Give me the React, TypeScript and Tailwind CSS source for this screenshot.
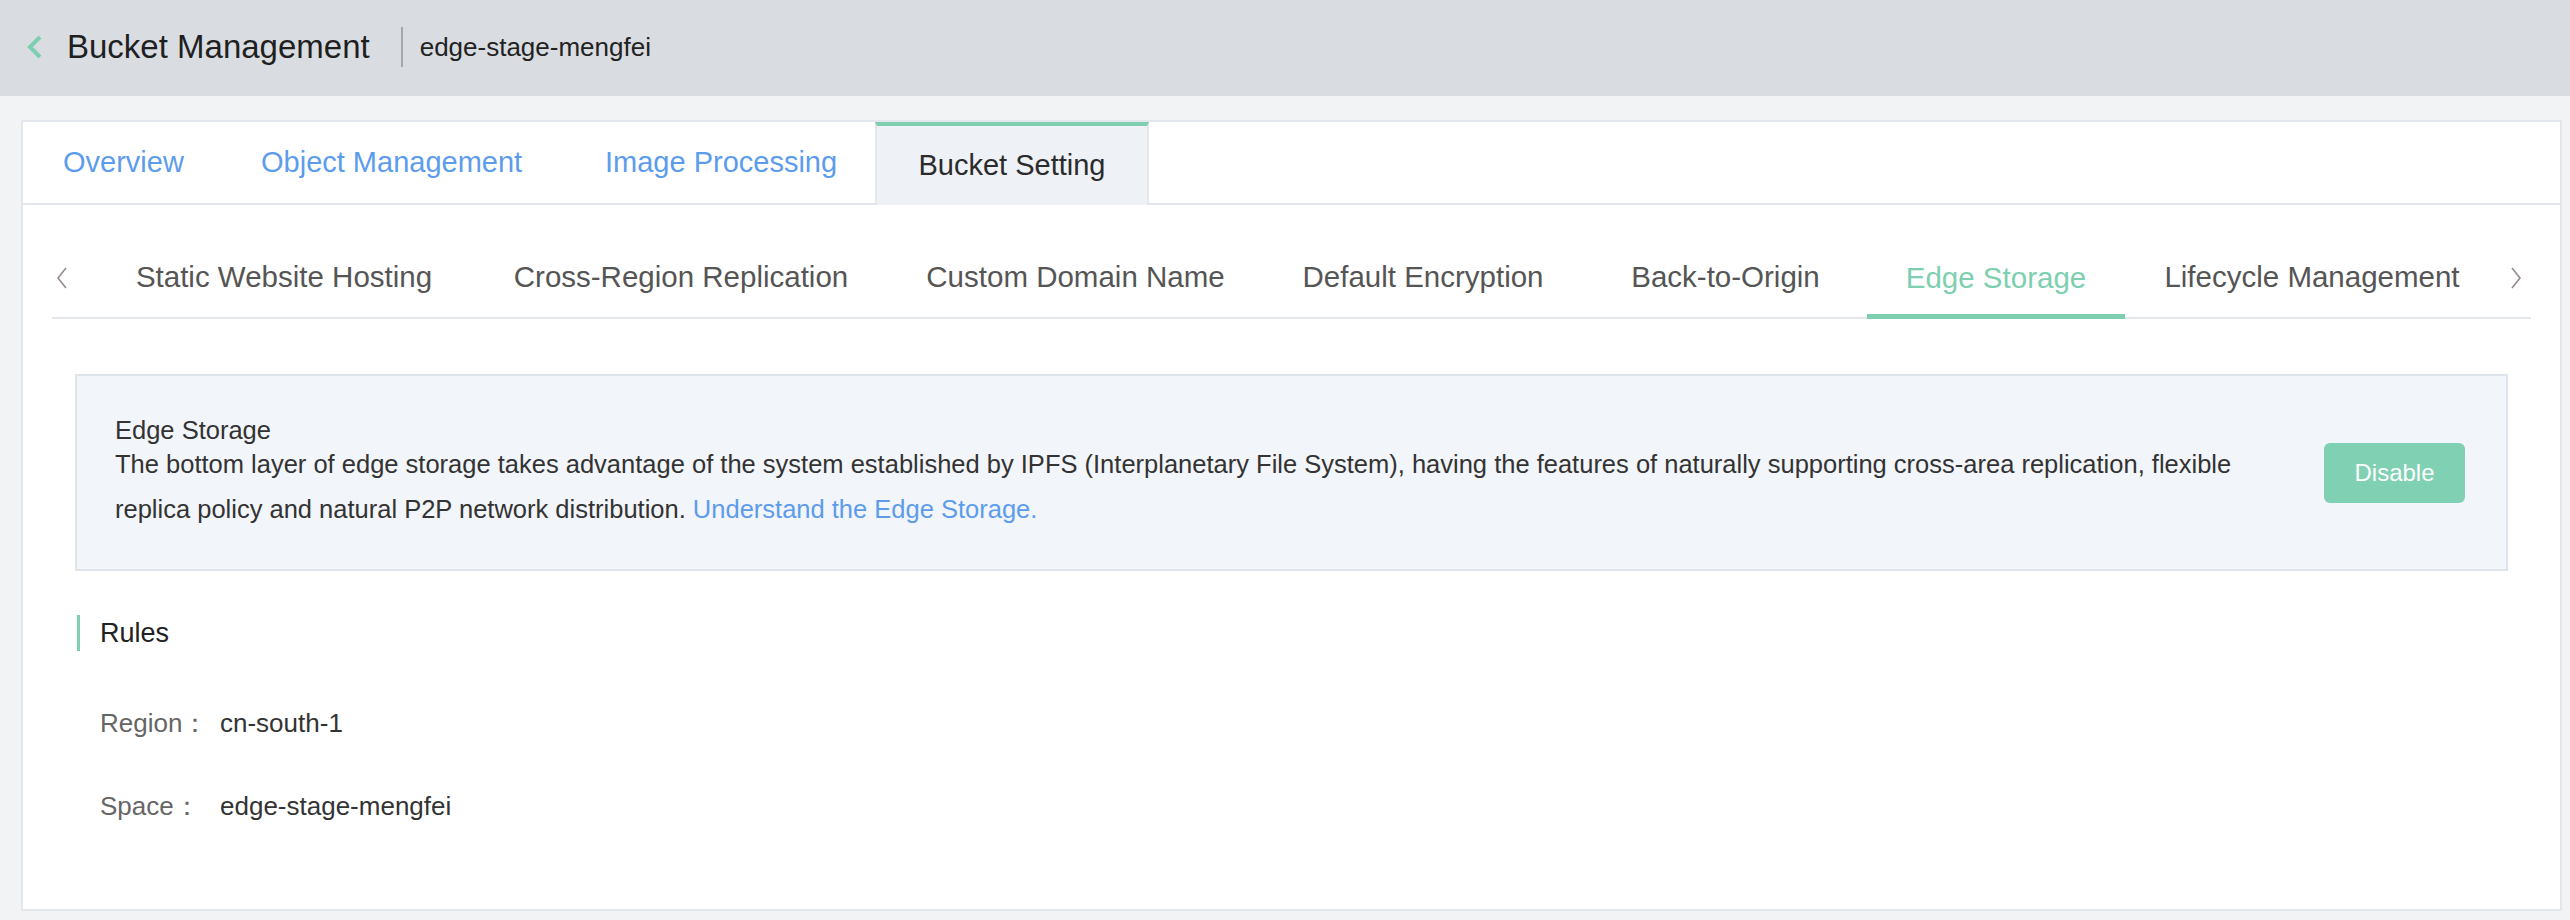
const mainTabs = [
  { label: "Overview", w: "w-[198px]" },
  { label: "Object Management", w: "w-[344px]" },
  { label: "Image Processing", w: "w-[310px]" },
];

const subTabs = [
  { label: "Static Website Hosting", w: "w-[378px]" },
  { label: "Cross-Region Replication", w: "w-[416px]" },
  { label: "Custom Domain Name", w: "w-[373px]" },
  { label: "Default Encryption", w: "w-[322px]" },
  { label: "Back-to-Origin", w: "w-[283px]" },
  { label: "Edge Storage", w: "w-[258px]", active: true },
  { label: "Lifecycle Management", w: "w-[374px]" },
];

function Chevron({ dir, className }: { dir: "left" | "right"; className?: string }) {
  return (
    <svg width="12" height="24" viewBox="0 0 12 24" className={className} fill="none">
      {dir === "left" ? (
        <polyline points="10,2 2,12 10,22" stroke="currentColor" strokeWidth="1.6" />
      ) : (
        <polyline points="2,2 10,12 2,22" stroke="currentColor" strokeWidth="1.6" />
      )}
    </svg>
  );
}

function Header() {
  return (
    <header className="flex h-[96px] items-center bg-[#d9dde1] pb-[2px]">
      <svg width="16" height="24" viewBox="0 0 16 24" className="ml-[27px]" fill="none">
        <polyline points="13,2 3,12 13,22" stroke="#7dcfb0" strokeWidth="4" />
      </svg>
      <h1 className="ml-[24px] text-[33px] text-[#1f1f1f]">Bucket Management</h1>
      <div className="ml-[31px] h-[40px] w-[2px] bg-[#a2a7ac]" />
      <span className="ml-[17px] text-[26px] text-[#222]">edge-stage-mengfei</span>
    </header>
  );
}

function TabBar() {
  return (
    <div className="flex h-[83px] border-b-2 border-[#e3e6eb]">
      {mainTabs.map((t) => (
        <div key={t.label} className={`${t.w} flex items-center pl-[40px] text-[29px] text-[#5d9cec]`}>
          {t.label}
        </div>
      ))}
      <div className="-mb-[2px] flex w-[274px] items-center justify-center border-x-2 border-t-4 border-x-[#e3e6eb] border-t-[#7dcfb0] bg-[#eef1f6] text-[29px] text-[#2b2b2b]">
        Bucket Setting
      </div>
    </div>
  );
}

function SubTabs() {
  return (
    <div className="mx-[29px] mt-[33px] flex h-[81px] border-b-2 border-[#e3e6eb]">
      <div className="flex w-[43px] items-center pl-[4px] text-[#958a90]">
        <Chevron dir="left" />
      </div>
      {subTabs.map((t) => (
        <div
          key={t.label}
          className={`${t.w} flex items-center justify-center text-[29.5px] ${
            t.active ? "-mb-[2px] border-b-[5px] border-[#7dcfb0] pt-[5px] text-[#7dcfb0]" : "text-[#555]"
          }`}
        >
          {t.label}
        </div>
      ))}
      <div className="flex flex-1 items-center pl-[11px] text-[#958a90]">
        <Chevron dir="right" />
      </div>
    </div>
  );
}

function InfoBox() {
  return (
    <div className="mt-[55px] flex h-[197px] border-2 border-[#dfe3ea] bg-[#f2f5fa] pl-[38px] pr-[41px]">
      <div className="flex-1 pt-[43px] text-[25.5px] text-[#333]">
        <div className="leading-[23px]">Edge Storage</div>
        <p className="leading-[45px]">
          The bottom layer of edge storage takes advantage of the system established by IPFS (Interplanetary File System), having the features of naturally supporting cross-area replication, flexible
          <br />
          replica policy and natural P2P network distribution.{" "}
          <a className="text-[#5d9cec]">Understand the Edge Storage.</a>
        </p>
      </div>
      <button className="self-center h-[60px] w-[141px] rounded-[6px] bg-[#80d0b4] text-[24px] text-white">
        Disable
      </button>
    </div>
  );
}

function Rules() {
  return (
    <div>
      <div className="mt-[42px] ml-[2px] flex items-center">
        <div className="h-[36px] w-[3px] bg-[#7dcfb0]" />
        <h2 className="ml-[20px] text-[27px] text-[#222]">Rules</h2>
      </div>
      <div className="ml-[25px] mt-[50px] flex h-[40px] items-center text-[26px]">
        <span className="w-[120px] text-[#666]">Region：</span>
        <span className="text-[#333]">cn-south-1</span>
      </div>
      <div className="ml-[25px] mt-[43px] flex h-[40px] items-center text-[26px]">
        <span className="w-[120px] text-[#666]">Space：</span>
        <span className="text-[#333]">edge-stage-mengfei</span>
      </div>
    </div>
  );
}

export default function App() {
  return (
    <div className="min-h-screen bg-[#f2f3f5] font-['Liberation_Sans',Arial,sans-serif]">
      <Header />
      <main className="ml-[21px] mr-[8px] mt-[24px] h-[791px] border-2 border-[#e3e6eb] bg-white">
        <TabBar />
        <SubTabs />
        <section className="px-[52px]">
          <InfoBox />
          <Rules />
        </section>
      </main>
    </div>
  );
}
